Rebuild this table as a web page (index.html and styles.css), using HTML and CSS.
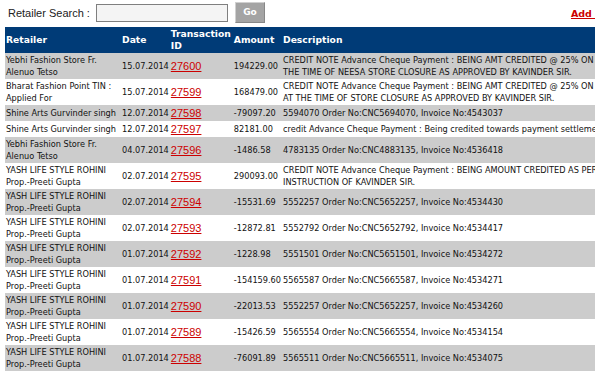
FILE: index.html
```html
<!DOCTYPE html>
<html>
<head>
<meta charset="utf-8">
<title>Retailer Payments</title>
<link rel="stylesheet" href="styles.css">
</head>
<body>
<div class="page">
  <div class="topbar">
    <label class="search-label" for="q">Retailer Search :</label>
    <input class="search-input" id="q" type="text">
    <button class="go-btn" type="button">Go</button>
    <a class="add-link" href="#">Add New</a>
  </div>
  <table class="grid">
    <thead>
      <tr>
        <th class="c-ret">Retailer</th>
        <th class="c-date">Date</th>
        <th class="c-id">Transaction ID</th>
        <th class="c-amt">Amount</th>
        <th class="c-desc">Description</th>
      </tr>
    </thead>
    <tbody>
      <tr class="alt">
        <td class="c-ret">Yebhi Fashion Store Fr. Alenuo Tetso</td>
        <td class="c-date">15.07.2014</td>
        <td class="c-id"><a href="#">27600</a></td>
        <td class="c-amt">194229.00</td>
        <td class="c-desc">CREDIT NOTE Advance Cheque Payment : BEING AMT CREDITED @ 25% ON MRP AT<br>THE TIME OF NEESA STORE CLOSURE AS APPROVED BY KAVINDER SIR.</td>
      </tr>
      <tr>
        <td class="c-ret">Bharat Fashion Point TIN : Applied For</td>
        <td class="c-date">15.07.2014</td>
        <td class="c-id"><a href="#">27599</a></td>
        <td class="c-amt">168479.00</td>
        <td class="c-desc">CREDIT NOTE Advance Cheque Payment : BEING AMT CREDITED @ 25% ON MRP<br>AT THE TIME OF STORE CLOSURE AS APPROVED BY KAVINDER SIR.</td>
      </tr>
      <tr class="alt">
        <td class="c-ret">Shine Arts Gurvinder singh</td>
        <td class="c-date">12.07.2014</td>
        <td class="c-id"><a href="#">27598</a></td>
        <td class="c-amt">-79097.20</td>
        <td class="c-desc">5594070 Order No:CNC5694070, Invoice No:4543037</td>
      </tr>
      <tr>
        <td class="c-ret">Shine Arts Gurvinder singh</td>
        <td class="c-date">12.07.2014</td>
        <td class="c-id"><a href="#">27597</a></td>
        <td class="c-amt">82181.00</td>
        <td class="c-desc">credit Advance Cheque Payment : Being credited towards payment settlement</td>
      </tr>
      <tr class="alt">
        <td class="c-ret">Yebhi Fashion Store Fr. Alenuo Tetso</td>
        <td class="c-date">04.07.2014</td>
        <td class="c-id"><a href="#">27596</a></td>
        <td class="c-amt">-1486.58</td>
        <td class="c-desc">4783135 Order No:CNC4883135, Invoice No:4536418</td>
      </tr>
      <tr>
        <td class="c-ret">YASH LIFE STYLE ROHINI Prop.-Preeti Gupta</td>
        <td class="c-date">02.07.2014</td>
        <td class="c-id"><a href="#">27595</a></td>
        <td class="c-amt">290093.00</td>
        <td class="c-desc">CREDIT NOTE Advance Cheque Payment : BEING AMOUNT CREDITED AS PER<br>INSTRUCTION OF KAVINDER SIR.</td>
      </tr>
      <tr class="alt">
        <td class="c-ret">YASH LIFE STYLE ROHINI Prop.-Preeti Gupta</td>
        <td class="c-date">02.07.2014</td>
        <td class="c-id"><a href="#">27594</a></td>
        <td class="c-amt">-15531.69</td>
        <td class="c-desc">5552257 Order No:CNC5652257, Invoice No:4534430</td>
      </tr>
      <tr>
        <td class="c-ret">YASH LIFE STYLE ROHINI Prop.-Preeti Gupta</td>
        <td class="c-date">02.07.2014</td>
        <td class="c-id"><a href="#">27593</a></td>
        <td class="c-amt">-12872.81</td>
        <td class="c-desc">5552792 Order No:CNC5652792, Invoice No:4534417</td>
      </tr>
      <tr class="alt">
        <td class="c-ret">YASH LIFE STYLE ROHINI Prop.-Preeti Gupta</td>
        <td class="c-date">01.07.2014</td>
        <td class="c-id"><a href="#">27592</a></td>
        <td class="c-amt">-1228.98</td>
        <td class="c-desc">5551501 Order No:CNC5651501, Invoice No:4534272</td>
      </tr>
      <tr>
        <td class="c-ret">YASH LIFE STYLE ROHINI Prop.-Preeti Gupta</td>
        <td class="c-date">01.07.2014</td>
        <td class="c-id"><a href="#">27591</a></td>
        <td class="c-amt">-154159.60</td>
        <td class="c-desc">5565587 Order No:CNC5665587, Invoice No:4534271</td>
      </tr>
      <tr class="alt">
        <td class="c-ret">YASH LIFE STYLE ROHINI Prop.-Preeti Gupta</td>
        <td class="c-date">01.07.2014</td>
        <td class="c-id"><a href="#">27590</a></td>
        <td class="c-amt">-22013.53</td>
        <td class="c-desc">5552257 Order No:CNC5652257, Invoice No:4534260</td>
      </tr>
      <tr>
        <td class="c-ret">YASH LIFE STYLE ROHINI Prop.-Preeti Gupta</td>
        <td class="c-date">01.07.2014</td>
        <td class="c-id"><a href="#">27589</a></td>
        <td class="c-amt">-15426.59</td>
        <td class="c-desc">5565554 Order No:CNC5665554, Invoice No:4534154</td>
      </tr>
      <tr class="alt">
        <td class="c-ret">YASH LIFE STYLE ROHINI Prop.-Preeti Gupta</td>
        <td class="c-date">01.07.2014</td>
        <td class="c-id"><a href="#">27588</a></td>
        <td class="c-amt">-76091.89</td>
        <td class="c-desc">5565511 Order No:CNC5665511, Invoice No:4534075</td>
      </tr>
    </tbody>
  </table>
</div>
</body>
</html>
```

FILE: styles.css
```css
html, body {
  margin: 0;
  padding: 0;
  background: #ffffff;
  overflow: hidden;
}

body {
  font-family: "Liberation Sans", Arial, sans-serif;
  color: #000;
}

.page {
  width: 1000px;
  padding-left: 5px;
}

.topbar {
  display: flex;
  align-items: center;
  height: 26px;
  padding-left: 3px;
}

.search-label {
  font-size: 11px;
  color: #222;
  margin-right: 6px;
}

.search-input {
  width: 132px;
  height: 18px;
  box-sizing: border-box;
  border: 1px solid #7f7f7f;
  background: #f4f4f4;
  margin: 0 7px 0 0;
  padding: 0;
}

.go-btn {
  width: 30px;
  height: 21px;
  box-sizing: border-box;
  margin: 0;
  padding: 0;
  background: #a4a4a4;
  border: 1px solid;
  border-color: #d0d0d0 #888 #888 #d0d0d0;
  color: #fff;
  font-family: "DejaVu Sans", Verdana, sans-serif;
  font-weight: bold;
  font-size: 9px;
  position: relative;
  top: -1px;
}

.add-link {
  margin-left: 306px;
  font-family: "DejaVu Sans", Verdana, sans-serif;
  font-weight: bold;
  font-size: 9.5px;
  color: #cc0000;
  text-decoration: underline;
  white-space: nowrap;
}

.grid {
  border-collapse: separate;
  border-spacing: 0;
  margin-top: 1px;
}

.grid th {
  background: #003b77;
  color: #fff;
  font-family: "DejaVu Sans", Verdana, sans-serif;
  font-weight: bold;
  font-size: 9.2px;
  line-height: 12px;
  text-align: left;
  vertical-align: middle;
  padding: 1px;
}

.grid td {
  font-family: "DejaVu Sans Condensed", "DejaVu Sans", sans-serif;
  font-stretch: semi-condensed;
  font-size: 9.1px;
  line-height: 12px;
  padding: 1px;
  vertical-align: middle;
  text-align: left;
  color: #111;
}

.grid tr.alt td {
  background: #cccccc;
}

.grid .c-ret {
  width: 114px;
}

.grid th.c-id {
  width: 61px;
}

.grid .c-date,
.grid .c-amt,
.grid .c-desc {
  white-space: nowrap;
}

.grid td.c-id {
  font-family: "Liberation Sans", Arial, sans-serif;
  font-stretch: normal;
  font-size: 11px;
  line-height: 14px;
}

.grid td.c-id a {
  color: #cc0000;
  text-decoration: underline;
}
```
